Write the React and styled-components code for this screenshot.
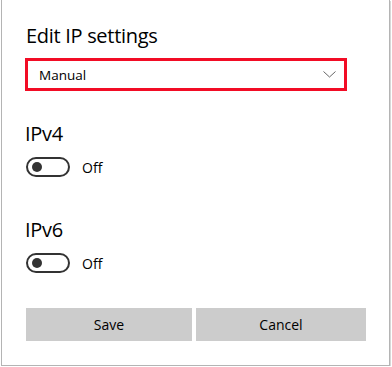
import React, { useState } from "react";
import styled, { createGlobalStyle } from "styled-components";

const Global = createGlobalStyle`
  html, body { margin: 0; padding: 0; background: #ffffff; }
  body { font-family: "Open Sans", "Noto Sans", "Liberation Sans", sans-serif; color: #000; }
`;

const Dialog = styled.div`
  box-sizing: border-box;
  margin-left: 1px;
  width: 389px;
  height: 366px;
  background: #fff;
  border: 1px solid #b4b4b4;
  border-top: none;
  box-shadow: 1px 1px 0 #d8d8d8;
  padding: 22px 22px 0 23px;
  display: flex;
  flex-direction: column;
`;

const Title = styled.h2`
  margin: 0;
  font-weight: 400;
  font-size: 20px;
  line-height: 28px;
  letter-spacing: -0.3px;
  margin-left: ${(p) => p.$indent || 0}px;
`;

const Select = styled.div`
  box-sizing: border-box;
  margin-top: 8px;
  width: 322px;
  height: 33px;
  border: 3px solid #f20c25;
  display: flex;
  align-items: center;
  justify-content: space-between;
  padding: 0 8px 0 11px;
  font-size: 13.5px;
`;

const Section = styled.div`
  margin-top: ${(p) => p.$top}px;
  display: flex;
  flex-direction: column;
`;

const ToggleRow = styled.label`
  margin-top: 9px;
  margin-left: 1px;
  display: flex;
  align-items: center;
  gap: 12px;
  font-size: 14px;
  cursor: pointer;
`;

const Track = styled.span`
  box-sizing: border-box;
  width: 44px;
  height: 20px;
  border: 2px solid #333;
  border-radius: 10px;
  position: relative;
  background: ${(p) => (p.$on ? "#0078d7" : "#fff")};
  border-color: ${(p) => (p.$on ? "#0078d7" : "#333")};
`;

const Thumb = styled.span`
  position: absolute;
  top: 3px;
  left: ${(p) => (p.$on ? "26px" : "4px")};
  width: 10px;
  height: 10px;
  border-radius: 50%;
  background: ${(p) => (p.$on ? "#fff" : "#333")};
`;

const Buttons = styled.div`
  margin-top: 35px;
  margin-left: 1px;
  display: grid;
  grid-template-columns: 166px 170px;
  gap: 4px;
`;

const Button = styled.button`
  height: 33px;
  border: none;
  background: #cccccc;
  font-family: inherit;
  font-size: 14px;
  color: #000;
  padding: 0;
`;

function Toggle({ on, onChange }) {
  return (
    <ToggleRow onClick={onChange}>
      <Track $on={on}>
        <Thumb $on={on} />
      </Track>
      <span>{on ? "On" : "Off"}</span>
    </ToggleRow>
  );
}

export default function App() {
  const [v4, setV4] = useState(false);
  const [v6, setV6] = useState(false);
  return (
    <>
      <Global />
      <Dialog>
        <Title $indent={1}>Edit IP settings</Title>
        <Select>
          <span>Manual</span>
          <svg width="13" height="7" viewBox="0 0 13 7">
            <path d="M0.5 0.5 L6.5 6 L12.5 0.5" fill="none" stroke="#666" strokeWidth="1" />
          </svg>
        </Select>
        <Section $top={29}>
          <Title>IPv4</Title>
          <Toggle on={v4} onChange={() => setV4(!v4)} />
        </Section>
        <Section $top={39}>
          <Title>IPv6</Title>
          <Toggle on={v6} onChange={() => setV6(!v6)} />
        </Section>
        <Buttons>
          <Button>Save</Button>
          <Button>Cancel</Button>
        </Buttons>
      </Dialog>
    </>
  );
}
